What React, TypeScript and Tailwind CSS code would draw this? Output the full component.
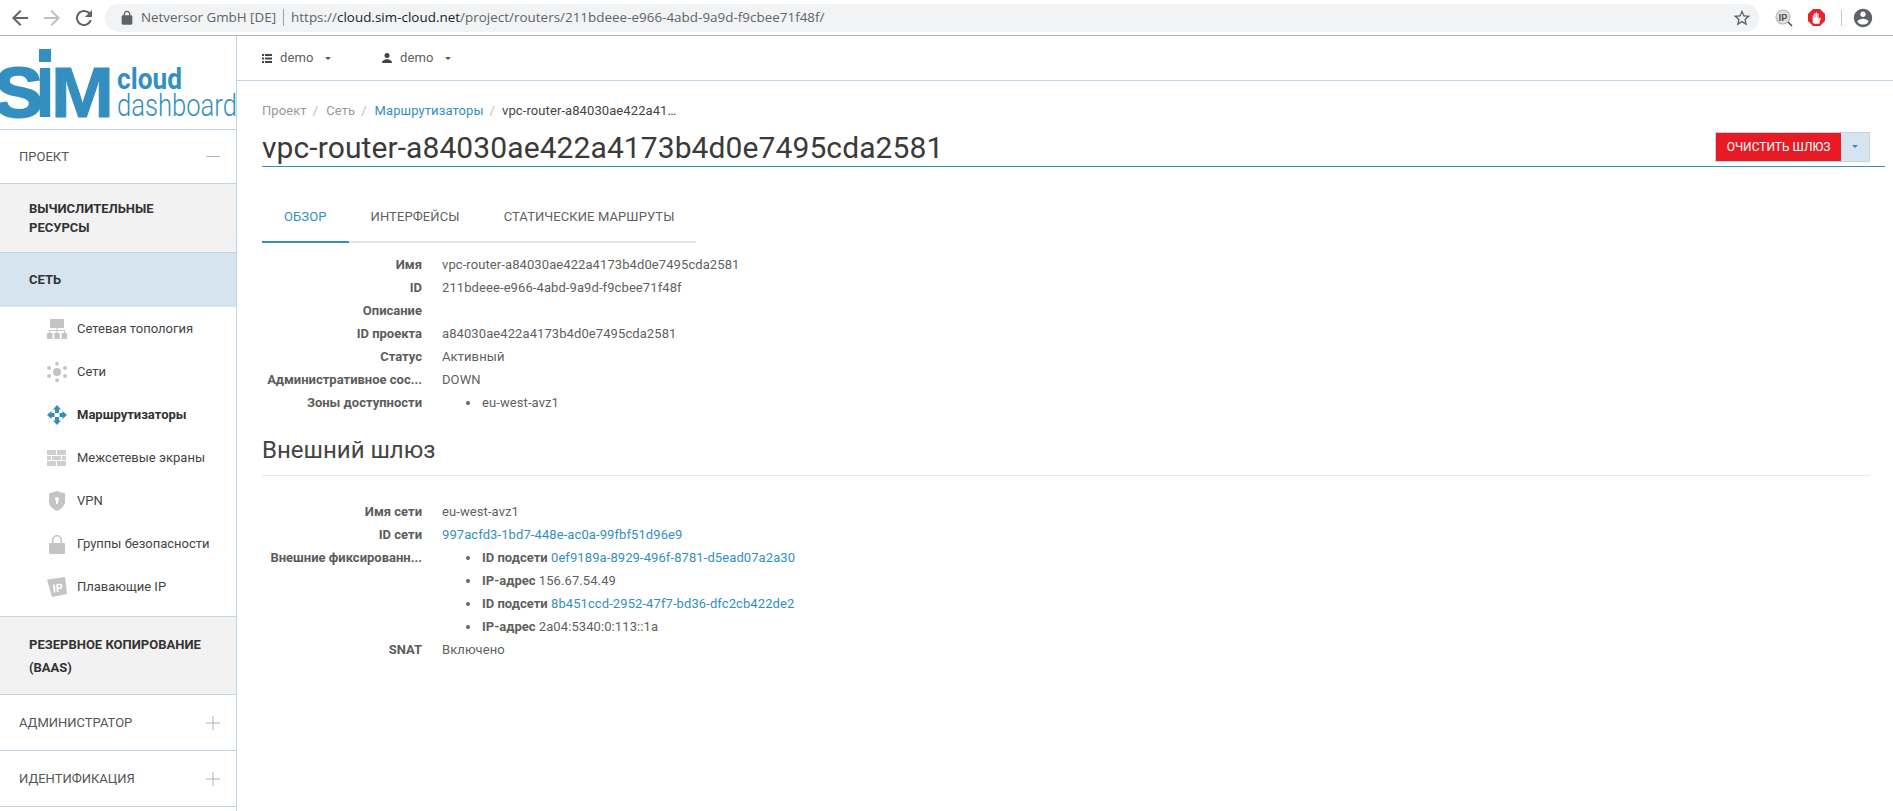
// Страница маршрутизатора: хром браузера, сайдбар и основной контент
const ICON_GRAY = "#c4c4c4";

function ChromeIcon({ d, color, size = 24 }: { d: string; color: string; size?: number }) {
  return (
    <svg width={size} height={size} viewBox="0 0 24 24" fill={color}>
      <path d={d} />
    </svg>
  );
}

function BrowserBar() {
  return (
    <div className="flex h-[36px] shrink-0 items-center border-b border-[#b5b5b5] bg-white pl-[8px] font-['Open_Sans',sans-serif]">
      <div className="flex items-center gap-[8px]">
        <ChromeIcon color="#5f6368" d="M20 11H7.83l5.59-5.59L12 4l-8 8 8 8 1.41-1.41L7.83 13H20v-2z" />
        <ChromeIcon color="#bdbfc2" d="M12 4l-1.41 1.41L16.17 11H4v2h12.17l-5.58 5.59L12 20l8-8z" />
        <ChromeIcon color="#5f6368" d="M17.65 6.35C16.2 4.9 14.21 4 12 4c-4.42 0-7.99 3.58-7.99 8s3.57 8 7.99 8c3.73 0 6.84-2.55 7.73-6h-2.08c-.82 2.33-3.04 4-5.65 4-3.31 0-6-2.69-6-6s2.69-6 6-6c1.66 0 3.14.69 4.22 1.78L13 11h7V4l-2.35 2.35z" />
      </div>
      <div className="ml-[9px] flex h-[28px] w-[1654px] items-center rounded-full bg-[#f1f3f4] pl-[14px] pr-[7px] text-[13.4px] text-[#5f6368]">
        <ChromeIcon size={16} color="#5f6368" d="M18 8h-1V6c0-2.76-2.24-5-5-5S7 3.24 7 6v2H6c-1.1 0-2 .9-2 2v10c0 1.1.9 2 2 2h12c1.1 0 2-.9 2-2V10c0-1.1-.9-2-2-2zM9 6c0-1.66 1.34-3 3-3s3 1.34 3 3v2H9V6z" />
        <span className="ml-[6px]">Netversor GmbH [DE]</span>
        <span className="mx-[7px] h-[17px] w-px bg-[#9aa0a6]" />
        <span className="tracking-[0.03px]">
          https://<span className="text-[#202124]">cloud.sim-cloud.net</span>/project/routers/211bdeee-e966-4abd-9a9d-f9cbee71f48f/
        </span>
        <span className="ml-auto">
          <ChromeIcon size={20} color="#5f6368" d="M22 9.24l-7.19-.62L12 2 9.19 8.63 2 9.24l5.46 4.73L5.82 21 12 17.27 18.18 21l-1.63-7.03L22 9.24zM12 15.4l-3.76 2.27 1-4.28-3.32-2.88 4.38-.38L12 6.1l1.71 4.04 4.38.38-3.32 2.88 1 4.28L12 15.4z" />
        </span>
      </div>
      <div className="ml-[16px] flex items-center">
        <svg width="18" height="18" viewBox="0 0 18 18">
          <circle cx="8" cy="8" r="7" fill="#dfe1e3" stroke="#b4b8bb" strokeWidth="1.2" />
          <text x="8" y="11.5" textAnchor="middle" fontSize="9.5" fontWeight="700" fill="#555" fontFamily="Roboto, sans-serif">IP</text>
          <path d="M13 13l4 4" stroke="#444" strokeWidth="1.5" />
        </svg>
        <svg className="ml-[15px]" width="17" height="17" viewBox="0 0 18 18">
          <path d="M5.3 0h7.4L18 5.3v7.4L12.700 18H5.300L0 12.700V5.300z" fill="#e8212b" />
          <path d="M5 14.500V7.200c0-.8 1.200-.8 1.200 0V9h.4V4.800c0-.8 1.300-.8 1.300 0V9h.4V4c0-.8 1.300-.8 1.300 0v5h.4V5.200c0-.8 1.200-.8 1.200 0V11l1.200-1.800c.5-.7 1.400 0 1 .6L12 15.500H6.500z" fill="#fff" />
        </svg>
        <span className="ml-[16px] h-[16px] w-px bg-[#c8cacc]" />
        <span className="ml-[10px]">
          <ChromeIcon size={22} color="#5f6368" d="M12 2C6.48 2 2 6.48 2 12s4.48 10 10 10 10-4.48 10-10S17.52 2 12 2zm0 3c1.66 0 3 1.34 3 3s-1.34 3-3 3-3-1.34-3-3 1.34-3 3-3zm0 14.2c-2.5 0-4.71-1.28-6-3.22.03-1.99 4-3.08 6-3.08 1.99 0 5.97 1.09 6 3.08-1.29 1.94-3.5 3.22-6 3.22z" />
        </span>
      </div>
    </div>
  );
}

function Logo() {
  return (
    <svg width="236" height="93" viewBox="0 0 236 93" className="block">
      <rect x="39" y="13" width="12" height="13" fill="#348fc0" />
      <text x="-6" y="81" fontFamily="Liberation Sans, sans-serif" fontWeight="700" fontSize="71" fill="#348fc0" stroke="#348fc0" strokeWidth="2" textLength="49" lengthAdjust="spacingAndGlyphs">S</text>
      <text x="35" y="81" fontFamily="Liberation Sans, sans-serif" fontWeight="700" fontSize="71" fill="#348fc0" textLength="20" lengthAdjust="spacingAndGlyphs">I</text>
      <text x="51" y="81" fontFamily="Liberation Sans, sans-serif" fontWeight="700" fontSize="71" fill="#348fc0" stroke="#348fc0" strokeWidth="1" textLength="63" lengthAdjust="spacingAndGlyphs">M</text>
      <text x="117" y="53" fontFamily="Roboto, sans-serif" fontWeight="700" fontSize="30" fill="#348fc0" textLength="65" lengthAdjust="spacingAndGlyphs">cloud</text>
      <text x="117" y="80" fontFamily="Roboto, sans-serif" fontWeight="300" fontSize="32" fill="#348fc0" textLength="120" lengthAdjust="spacingAndGlyphs">dashboard</text>
    </svg>
  );
}

const subIcons: Record<string, React.ReactNode> = {
  topology: (
    <g fill={ICON_GRAY}>
      <rect x="3" y="0" width="14" height="9" />
      <rect x="9.500" y="9" width="1" height="3" />
      <rect x="2" y="11" width="16" height="1" />
      <rect x="2" y="11" width="1" height="3" />
      <rect x="17" y="11" width="1" height="3" />
      <rect x="9.500" y="12" width="1" height="2" />
      <rect x="0" y="14" width="5.500" height="6" />
      <rect x="7.250" y="14" width="5.500" height="6" />
      <rect x="14.500" y="14" width="5.500" height="6" />
    </g>
  ),
  networks: (
    <g fill={ICON_GRAY}>
      <circle cx="10" cy="10" r="4" />
      <circle cx="10" cy="1.800" r="1.900" />
      <circle cx="10" cy="18.200" r="1.900" />
      <circle cx="2" cy="6" r="1.900" />
      <circle cx="18" cy="6" r="1.900" />
      <circle cx="2" cy="14" r="1.900" />
      <circle cx="18" cy="14" r="1.900" />
    </g>
  ),
  routers: (
    <g fill="#348fc0">
      <path d="M10 0l4 4.500H12V8H8V4.500H6z" />
      <path d="M10 20l4-4.500H12V12H8v3.500H6z" />
      <path d="M0 10l4.500-4V8H7.500v4H4.500v2z" />
      <path d="M20 10l-4.500-4V8H12.500v4h3v2z" />
    </g>
  ),
  firewall: (
    <g fill="#cfcfcf">
      <rect x="0" y="2" width="9" height="5" />
      <rect x="10" y="2" width="9" height="5" />
      <rect x="0" y="8" width="4" height="4" />
      <rect x="5" y="8" width="9" height="4" />
      <rect x="15" y="8" width="4" height="4" />
      <rect x="0" y="13" width="9" height="5" />
      <rect x="10" y="13" width="9" height="5" />
    </g>
  ),
  vpn: (
    <g>
      <path d="M10 0l8 2.500v8c0 4.500-4 7.500-8 9.500-4-2-8-5-8-9.500v-8z" fill={ICON_GRAY} />
      <circle cx="10" cy="8" r="2" fill="#fff" />
      <rect x="9" y="8" width="2" height="5" fill="#fff" />
    </g>
  ),
  security: (
    <path d="M15 9V6a5 5 0 0 0-10 0v3H3a1 1 0 0 0-1 1v9a1 1 0 0 0 1 1h14a1 1 0 0 0 1-1v-9a1 1 0 0 0-1-1zM6.500 9V6a3.500 3.500 0 0 1 7 0v3z" fill={ICON_GRAY} />
  ),
  floating: (
    <g>
      <path d="M0 2.500L18 0l2 17-15 3z" fill={ICON_GRAY} />
      <text x="5.500" y="15" fontSize="11" fontWeight="700" fill="#fff" fontFamily="Roboto, sans-serif" transform="rotate(-6 10 10)">IP</text>
    </g>
  ),
};

const subItems = [
  { key: "topology", label: "Сетевая топология" },
  { key: "networks", label: "Сети" },
  { key: "routers", label: "Маршрутизаторы", active: true },
  { key: "firewall", label: "Межсетевые экраны" },
  { key: "vpn", label: "VPN" },
  { key: "security", label: "Группы безопасности" },
  { key: "floating", label: "Плавающие IP" },
];

function Sidebar() {
  return (
    <aside className="flex w-[237px] shrink-0 flex-col border-r border-[#c0d6e6] text-[13px] text-[#444]">
      <div className="h-[94px] shrink-0 border-b border-[#c0d6e6]">
        <Logo />
      </div>
      <div className="flex h-[54px] shrink-0 items-center justify-between border-b border-[#c0d6e6] pl-[19px] pr-[16px]">
        <span className="text-[#555]">ПРОЕКТ</span>
        <span className="h-px w-[14px] bg-[#a9b8c2]" />
      </div>
      <div className="flex h-[69px] shrink-0 items-center border-b border-[#c0d6e6] bg-[#f2f2f2] pl-[29px] pr-[16px] font-bold leading-[19.5px] text-[#333]">
        ВЫЧИСЛИТЕЛЬНЫЕ<br />РЕСУРСЫ
      </div>
      <div className="flex h-[54px] shrink-0 items-center bg-[#d6e4ef] pl-[29px] font-bold text-[#333]">СЕТЬ</div>
      <div className="flex h-[310px] shrink-0 flex-col border-b border-[#c0d6e6]">
        {subItems.map((item) => (
          <div key={item.key} className="flex h-[43px] shrink-0 items-center pl-[47px]">
            <svg width="20" height="20" viewBox="0 0 20 20" className="shrink-0">
              {subIcons[item.key]}
            </svg>
            <span className={item.active ? "ml-[10px] font-bold text-[#333]" : "ml-[10px] text-[#444]"}>{item.label}</span>
          </div>
        ))}
      </div>
      <div className="flex h-[78px] shrink-0 items-center border-b border-[#c0d6e6] bg-[#f2f2f2] pl-[29px] pr-[8px] pt-[1px] font-bold leading-[23px] text-[#333]">
        <span>РЕЗЕРВНОЕ КОПИРОВАНИЕ<br />(BAAS)</span>
      </div>
      {["АДМИНИСТРАТОР", "ИДЕНТИФИКАЦИЯ"].map((label) => (
        <div key={label} className="flex h-[56px] shrink-0 items-center justify-between border-b border-[#c0d6e6] pl-[19px] pr-[16px] pt-[1px]">
          <span className="text-[#555]">{label}</span>
          <svg width="14" height="14" viewBox="0 0 14 14">
            <path d="M7 0v14M0 7h14" stroke="#a9b8c2" strokeWidth="1" />
          </svg>
        </div>
      ))}
    </aside>
  );
}

function Caret({ color = "#555" }: { color?: string }) {
  return <span className="h-0 w-0 border-x-[3px] border-t-[3px] border-x-transparent" style={{ borderTopColor: color }} />;
}

function TopNav() {
  return (
    <div className="flex h-[45px] shrink-0 items-center border-b border-[#c0d6e6] pl-[25px] text-[13px] tracking-[0.1px] text-[#5f5f5f]">
      <div className="flex w-[120px] items-center">
        <svg width="10" height="9" viewBox="0 0 10 9" fill="#444">
          <path d="M0 0h2v2H0zM3 0h7v2H3zM0 3.500h2v2H0zM3 3.500h7v2H3zM0 7h2v2H0zM3 7h7v2H3z" />
        </svg>
        <span className="ml-[8px]">demo</span>
        <span className="ml-[12px] flex"><Caret /></span>
      </div>
      <div className="flex items-center">
        <svg width="10" height="10" viewBox="0 0 12 12" fill="#444">
          <circle cx="6" cy="3" r="3" />
          <path d="M0 12c0-3 3-4.500 6-4.500s6 1.500 6 4.500z" />
        </svg>
        <span className="ml-[8px]">demo</span>
        <span className="ml-[12px] flex"><Caret /></span>
      </div>
    </div>
  );
}

function Row({ label, children }: { label: string; children?: React.ReactNode }) {
  return (
    <div className="flex h-[23px] items-center">
      <div className="w-[160px] shrink-0 truncate text-right font-bold text-[#5c5c5c]">{label}</div>
      <div className="ml-[20px] tracking-[0.09px] text-[#5f5f5f]">{children}</div>
    </div>
  );
}

function Bullet({ children }: { children: React.ReactNode }) {
  return (
    <div className="flex items-center pl-[24px]">
      <span className="h-[4px] w-[4px] rounded-full bg-[#666]" />
      <span className="ml-[12px]">{children}</span>
    </div>
  );
}

const A = ({ children }: { children: React.ReactNode }) => <span className="text-[#348fc0]">{children}</span>;

function Main() {
  return (
    <main className="min-w-0 flex-1">
      <TopNav />
      <div className="pl-[25px] pr-[8px] text-[13px]">
        <div className="flex h-[45px] items-end pb-[6px] tracking-[0.09px] text-[#999]">
          <span>Проект</span>
          <span className="mx-[6px] text-[#bbb]">/</span>
          <span className="ml-[2px]">Сеть</span>
          <span className="mx-[6px] text-[#bbb]">/</span>
          <span className="ml-[2px] text-[#348fc0]">Маршрутизаторы</span>
          <span className="mx-[6px] text-[#bbb]">/</span>
          <span className="ml-[1px] text-[#444]">vpc-router-a84030ae422a41…</span>
        </div>
        <div className="flex h-[41px] items-center justify-between border-b border-[#348fc0] pr-[15px]">
          <h1 className="mt-[3px] text-[30px] leading-[36px] tracking-[0.09px] text-[#3a3a3a]">vpc-router-a84030ae422a4173b4d0e7495cda2581</h1>
          <div className="mt-[1px] flex h-[30px] border border-[#c0d6e6]">
            <button className="w-[125px] bg-[#e81b25] text-[12px] text-white">ОЧИСТИТЬ ШЛЮЗ</button>
            <button className="flex w-[28px] items-center justify-center bg-[#d6e4ef]"><Caret color="#348fc0" /></button>
          </div>
        </div>

        <div className="mt-[25px] flex h-[51px] w-[434px] border-b-2 border-[#e5e5e5] tracking-[0.1px] text-[#5f5f5f]">
          <div className="-mb-[2px] flex shrink-0 items-center whitespace-nowrap border-b-2 border-[#348fc0] px-[22px] text-[#348fc0]">ОБЗОР</div>
          <div className="flex shrink-0 items-center whitespace-nowrap px-[22px]">ИНТЕРФЕЙСЫ</div>
          <div className="flex shrink-0 items-center whitespace-nowrap px-[22px]">СТАТИЧЕСКИЕ МАРШРУТЫ</div>
        </div>

        <div className="mt-[10px]">
          <Row label="Имя">vpc-router-a84030ae422a4173b4d0e7495cda2581</Row>
          <Row label="ID">211bdeee-e966-4abd-9a9d-f9cbee71f48f</Row>
          <Row label="Описание" />
          <Row label="ID проекта">a84030ae422a4173b4d0e7495cda2581</Row>
          <Row label="Статус">Активный</Row>
          <Row label="Административное сос...">DOWN</Row>
          <Row label="Зоны доступности"><Bullet>eu-west-avz1</Bullet></Row>
        </div>

        <h2 className="mr-[15px] mt-[18px] h-[44px] border-b border-[#e8e8e8] text-[24px] leading-[36px] text-[#444]">Внешний шлюз</h2>

        <div className="mt-[24px]">
          <Row label="Имя сети">eu-west-avz1</Row>
          <Row label="ID сети"><A>997acfd3-1bd7-448e-ac0a-99fbf51d96e9</A></Row>
          <Row label="Внешние фиксированн...">
            <Bullet><b className="tracking-normal">ID подсети</b> <A>0ef9189a-8929-496f-8781-d5ead07a2a30</A></Bullet>
          </Row>
          <Row label=""><Bullet><b className="tracking-normal">IP-адрес</b> 156.67.54.49</Bullet></Row>
          <Row label=""><Bullet><b className="tracking-normal">ID подсети</b> <A>8b451ccd-2952-47f7-bd36-dfc2cb422de2</A></Bullet></Row>
          <Row label=""><Bullet><b className="tracking-normal">IP-адрес</b> 2a04:5340:0:113::1a</Bullet></Row>
          <Row label="SNAT">Включено</Row>
        </div>
      </div>
    </main>
  );
}

export default function App() {
  return (
    <div className="flex h-[811px] flex-col overflow-hidden bg-white font-['Roboto',sans-serif]">
      <BrowserBar />
      <div className="flex min-h-0 flex-1">
        <Sidebar />
        <Main />
      </div>
    </div>
  );
}
